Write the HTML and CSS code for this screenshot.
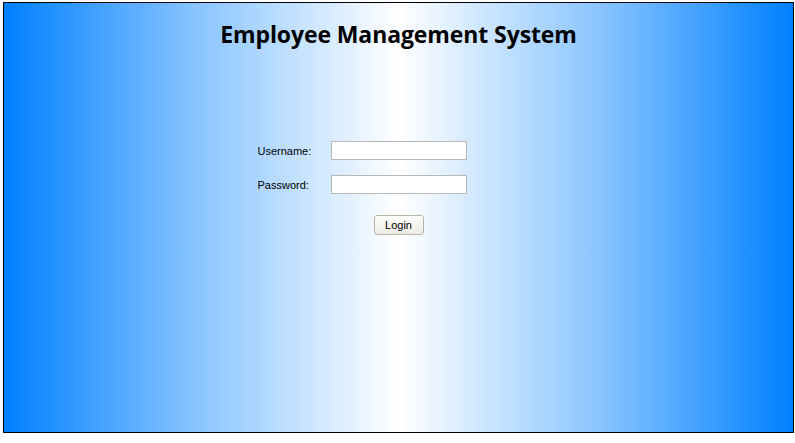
FILE: index.html
```html
<!DOCTYPE html>
<html>
<head>
<meta charset="utf-8">
<link rel="stylesheet" href="styles.css">
</head>
<body>
<div class="page">
  <h1 class="title">Employee Management System</h1>
  <form class="login">
    <div class="row">
      <label class="label">Username:</label>
      <input class="field" type="text">
    </div>
    <div class="row">
      <label class="label">Password:</label>
      <input class="field" type="password">
    </div>
    <div class="actions">
      <button class="btn" type="button">Login</button>
    </div>
  </form>
</div>
</body>
</html>
```
FILE: styles.css
```css
html, body { margin: 0; padding: 0; background: #fff; }
body { padding: 2px 0 0 3px; }
.page {
  box-sizing: border-box;
  width: 791px;
  height: 431px;
  border: 1px solid #000;
  background: linear-gradient(to right, #0080ff 0%, #8cc6ff 25%, #ffffff 50%, #8cc6ff 75%, #0080ff 100%);
  display: flex;
  flex-direction: column;
  align-items: center;
}
.title {
  margin: 15px 0 0 0;
  font-family: "Open Sans", "Liberation Sans", sans-serif;
  font-weight: 700;
  font-size: 23px;
  line-height: 32px;
  color: #000;
  letter-spacing: -0.1px;
}
.login {
  align-self: stretch;
  margin-top: 91px;
  display: flex;
  flex-direction: column;
  align-items: center;
  gap: 15px;
}
.row {
  display: flex;
  align-items: center;
  padding-right: 73px;
}
.label {
  width: 73px;
  font-family: "Liberation Sans", Arial, sans-serif;
  font-size: 11px;
  color: #000;
}
.field {
  box-sizing: border-box;
  width: 136px;
  height: 19px;
  margin: 0;
  border: 1px solid #b8b8b8;
  background: #fff;
  padding: 1px 3px;
}
.actions {
  display: flex;
  justify-content: center;
  margin-top: 6px;
}
.btn {
  box-sizing: border-box;
  width: 50px;
  height: 20px;
  border: 1px solid #b9b6a8;
  border-radius: 3px;
  background: linear-gradient(#fdfdfb, #ecebe4);
  font-family: "Liberation Sans", Arial, sans-serif;
  font-size: 11px;
  color: #000;
  padding: 0;
}
```
